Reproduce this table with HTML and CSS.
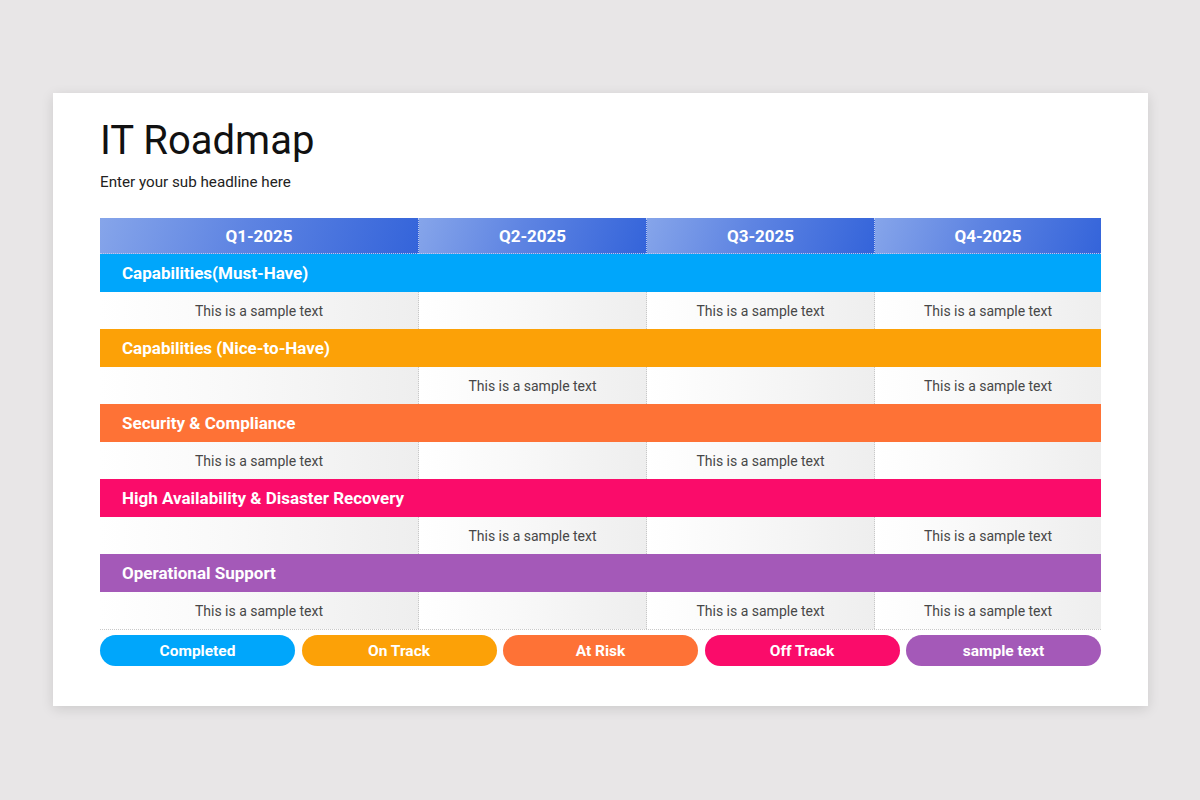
FILE: index.html
```html
<!DOCTYPE html>
<html>
<head>
<meta charset="utf-8">
<link rel="stylesheet" href="styles.css">
</head>
<body>
<div class="card">
  <h1 class="title">IT Roadmap</h1>
  <p class="sub">Enter your sub headline here</p>
  <div class="table">
    <div class="hd">Q1-2025</div>
    <div class="hd">Q2-2025</div>
    <div class="hd">Q3-2025</div>
    <div class="hd">Q4-2025</div>

    <div class="cat c1">Capabilities(Must-Have)</div>
    <div class="cell">This is a sample text</div>
    <div class="cell"></div>
    <div class="cell">This is a sample text</div>
    <div class="cell">This is a sample text</div>

    <div class="cat c2">Capabilities (Nice-to-Have)</div>
    <div class="cell"></div>
    <div class="cell">This is a sample text</div>
    <div class="cell"></div>
    <div class="cell">This is a sample text</div>

    <div class="cat c3">Security &amp; Compliance</div>
    <div class="cell">This is a sample text</div>
    <div class="cell"></div>
    <div class="cell">This is a sample text</div>
    <div class="cell"></div>

    <div class="cat c4">High Availability &amp; Disaster Recovery</div>
    <div class="cell"></div>
    <div class="cell">This is a sample text</div>
    <div class="cell"></div>
    <div class="cell">This is a sample text</div>

    <div class="cat c5">Operational Support</div>
    <div class="cell">This is a sample text</div>
    <div class="cell"></div>
    <div class="cell">This is a sample text</div>
    <div class="cell">This is a sample text</div>
  </div>
  <div class="legend">
    <div class="pill c1">Completed</div>
    <div class="pill c2">On Track</div>
    <div class="pill c3">At Risk</div>
    <div class="pill c4">Off Track</div>
    <div class="pill c5">sample text</div>
  </div>
</div>
</body>
</html>
```

FILE: styles.css
```css
html, body {
  margin: 0;
  padding: 0;
}
body {
  background: #e8e6e7;
  font-family: Roboto, "Liberation Sans", sans-serif;
  width: 1200px;
  height: 800px;
  overflow: hidden;
}
.card {
  box-sizing: border-box;
  margin: 93px 0 0 53px;
  width: 1095px;
  height: 613px;
  background: #fff;
  padding: 24px 47px 0 47px;
  box-shadow: 0 3px 12px rgba(0, 0, 0, 0.12);
}
.title {
  margin: 0;
  font-size: 40px;
  line-height: 48px;
  font-weight: 400;
  color: #111;
}
.sub {
  margin: 7px 0 0 0;
  font-size: 15.2px;
  line-height: 20px;
  color: #222;
}
.table {
  margin-top: 26px;
  display: grid;
  grid-template-columns: 318px 228px 228px 227px;
  grid-template-rows: 36px repeat(10, 37.5px);
  border-bottom: 1px dotted #c8c8c8;
}
.hd {
  display: flex;
  align-items: center;
  justify-content: center;
  color: #fff;
  font-weight: 700;
  font-size: 17px;
  padding-top: 1px;
  background: linear-gradient(110deg, #86a5ea 0%, #5e84e2 45%, #3464da 100%);
  border-left: 1px dotted #b9c8f0;
  border-bottom: 1px dotted #b9c8f0;
}
.hd:first-child {
  border-left: none;
}
.cat {
  grid-column: 1 / -1;
  display: flex;
  align-items: center;
  padding-left: 22px;
  padding-top: 1px;
  color: #fff;
  font-weight: 700;
  font-size: 17px;
}
.cell {
  display: flex;
  align-items: center;
  justify-content: center;
  padding-top: 1px;
  font-size: 14px;
  color: #474747;
  background: linear-gradient(90deg, #ffffff 0%, #f9f9f9 40%, #eeeeee 100%);
  border-left: 1px dotted #c8c8c8;
}
.cat + .cell {
  border-left: none;
}
.c1 { background: #00a6fb; }
.c2 { background: #fca107; }
.c3 { background: #fe7236; }
.c4 { background: #fa0c6a; }
.c5 { background: #a459b8; }
.legend {
  margin-top: 5px;
  display: grid;
  grid-template-columns: repeat(5, 1fr);
  column-gap: 6.5px;
  width: 1001px;
}
.pill {
  height: 31px;
  border-radius: 16px;
  display: flex;
  align-items: center;
  justify-content: center;
  color: #fff;
  font-weight: 700;
  font-size: 15.5px;
}
```
